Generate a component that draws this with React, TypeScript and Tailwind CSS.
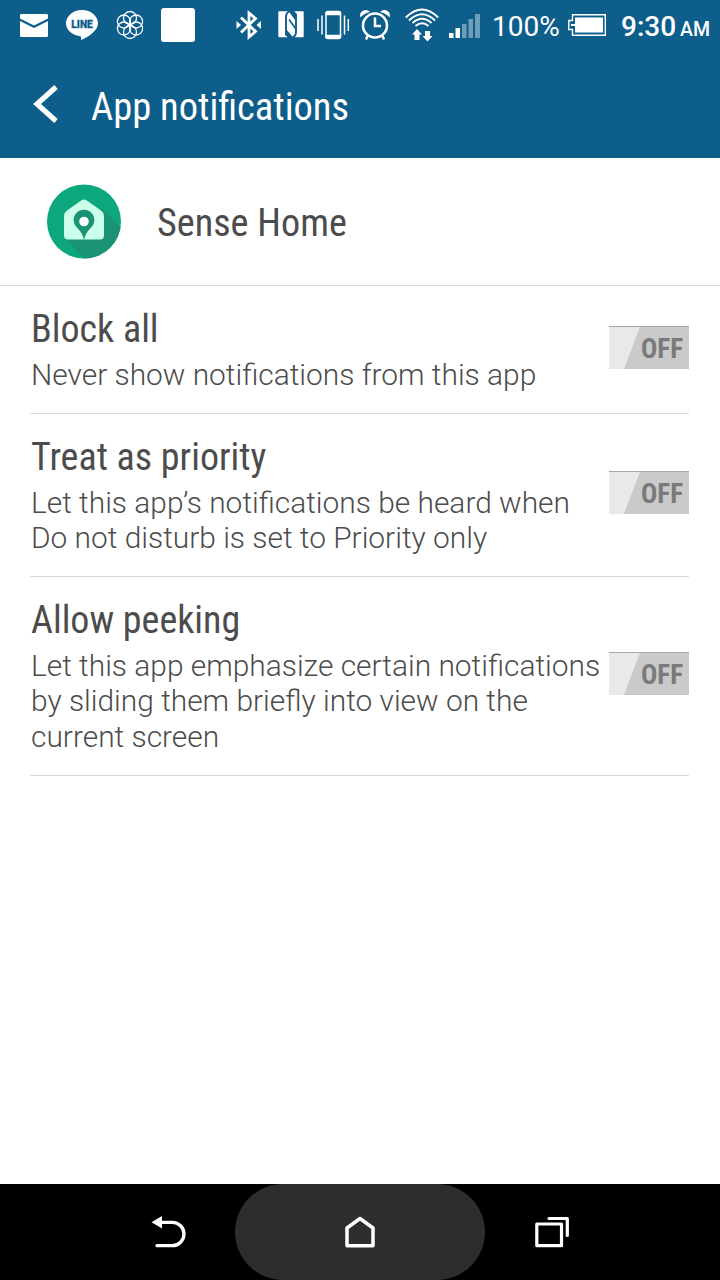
import { useState } from "react";

const settings = [
  {
    id: "block",
    title: "Block all",
    lines: ["Never show notifications from this app"],
    rowClass: "h-[128px]",
  },
  {
    id: "priority",
    title: "Treat as priority",
    lines: [
      "Let this app’s notifications be heard when",
      "Do not disturb is set to Priority only",
    ],
    rowClass: "h-[163px]",
  },
  {
    id: "peeking",
    title: "Allow peeking",
    lines: [
      "Let this app emphasize certain notifications",
      "by sliding them briefly into view on the",
      "current screen",
    ],
    rowClass: "h-[199px]",
  },
];

const condensed =
  "font-['Roboto_Condensed',Roboto,sans-serif] font-stretch-condensed";

function StatusBar() {
  return (
    <div className="flex h-[50px] items-start text-white">
      {/* Mail */}
      <svg className="ml-[18px] h-[50px] w-8 shrink-0" viewBox="18 0 32 50">
        <path d="M21 14H47L48 15V18.5L34 25.5L20 18.5V15Z" fill="white" />
        <path d="M20 21L34 28L48 21V36L47 37H21L20 36Z" fill="white" />
      </svg>
      {/* LINE */}
      <svg className="ml-[14px] h-[50px] w-9 shrink-0" viewBox="64 0 36 50">
        <path
          d="M82 10C73 10 66 16 66 23.5C66 30 72 35 79.500 36C81.500 36.300 81.300 38 81 40C87 37.500 98 31 98 23.500C98 16 91 10 82 10Z"
          fill="white"
        />
        <text
          x="71.300"
          y="27.800"
          textLength="21.500"
          lengthAdjust="spacingAndGlyphs"
          className="fill-[#0e5e8b] stroke-[#0e5e8b] font-[Roboto,sans-serif] text-[11px] font-black"
          strokeWidth="0.3"
        >
          LINE
        </text>
      </svg>
      {/* Flower of circles */}
      <svg
        className="ml-[14px] h-[50px] w-8 shrink-0"
        viewBox="114 0 32 50"
        fill="none"
        stroke="white"
        strokeWidth="1.300"
      >
        <circle cx="130" cy="18" r="6.500" />
        <circle cx="136.100" cy="21.500" r="6.500" />
        <circle cx="136.100" cy="28.500" r="6.500" />
        <circle cx="130" cy="32" r="6.500" />
        <circle cx="123.900" cy="28.500" r="6.500" />
        <circle cx="123.900" cy="21.500" r="6.500" />
      </svg>
      <div className="mt-2 ml-[15px] h-[34px] w-[34px] shrink-0 rounded-[3px] bg-white" />
      {/* Bluetooth */}
      <svg className="ml-[39px] h-[50px] w-[30px] shrink-0" viewBox="234 0 30 50">
        <path
          d="M241 17.500L255.500 31.500L249 37V13L255.500 18.500L241 32.500"
          fill="none"
          stroke="white"
          strokeWidth="2.800"
        />
        <path d="M236.500 21L241 25L236.500 29ZM261 21L256.500 25L261 29Z" fill="white" />
      </svg>
      {/* NFC */}
      <svg className="ml-[12px] h-[50px] w-[30px] shrink-0" viewBox="276 0 30 50">
        <rect x="278.300" y="11.300" width="25.400" height="26" rx="1" fill="white" />
        <g fill="none" stroke="#0e5e8b">
          <path d="M289 11.500Q286 13 286 17V34.500L289 37M293 11.500L296 14.500V32Q296 36 292.500 37.500" strokeWidth="1.900" />
          <path d="M289 19.500L295.500 28.500" strokeWidth="1.600" />
        </g>
        <path d="M288.500 11H294L296 16L295 20ZM287 30L293.500 38H288L286 34Z" fill="#0e5e8b" />
      </svg>
      {/* Vibrate */}
      <svg className="ml-[9px] h-[50px] w-9 shrink-0" viewBox="315 0 36 50">
        <rect x="326" y="11.500" width="14.500" height="27" rx="2" fill="none" stroke="white" strokeWidth="1.500" />
        <path d="M325.300 14Q325.300 11 328 11H338.500Q341.200 11 341.200 14V15.200H325.300ZM325.300 34.800H341.200V36.500Q341.200 39 338.500 39H328Q325.300 39 325.300 36.500Z" fill="white" />
        <path d="M318 19V31M322 15.500V34.500M344.500 15.500V34.500M348.300 19V31" stroke="white" strokeWidth="1.500" />
      </svg>
      {/* Alarm */}
      <svg className="ml-[7px] h-[50px] w-[34px] shrink-0" viewBox="358 0 34 50">
        <circle cx="375" cy="25.500" r="12" fill="none" stroke="white" strokeWidth="2.500" />
        <path d="M375 17.500V26H381M368 35L366 39.500M382 35L384 39.500" fill="none" stroke="white" strokeWidth="2.500" />
        <path d="M360.500 17.500Q359 13 362.500 11Q366.500 8.500 370 12Q364 13 360.500 17.500ZM389.500 17.500Q391 13 387.500 11Q383.500 8.500 380 12Q386 13 389.500 17.500Z" fill="white" />
      </svg>
      {/* Wifi with traffic arrows */}
      <svg className="ml-[11px] h-[50px] w-[38px] shrink-0" viewBox="403 0 38 50">
        <path
          d="M405.800 17.500Q422 1.500 438.200 17.500M409 20.500Q422 8 435 20.500M412.500 23Q422 14.500 431.500 23M415.500 26Q422 20.500 428.500 26"
          fill="none"
          stroke="white"
          strokeWidth="2"
        />
        <path d="M417 29L422 34.500H419.500V40H414.500V34.500H412ZM427.500 41.500L422.500 36H425V31H430V36H432.500Z" fill="white" />
      </svg>
      {/* Signal */}
      <svg className="ml-[7px] h-[50px] w-[34px] shrink-0" viewBox="448 0 34 50">
        <path d="M449 33H453.500V38H449ZM455.500 28H460V38H455.500Z" fill="white" />
        <path d="M462 24H466.500V38H462ZM468.500 19H473V38H468.500ZM475 14H480V38H475Z" fill="white" opacity="0.4" />
      </svg>
      <div className="ml-[10px] w-[68px] shrink-0 font-[Roboto,sans-serif] text-[28px] leading-[54px] whitespace-nowrap">
        100%
      </div>
      {/* Battery */}
      <svg className="ml-[7px] h-[50px] w-10 shrink-0" viewBox="567 0 40 50">
        <path
          d="M572.500 14.700H605.300V35.300H572.500V29.500H568.800V20.500H572.500Z"
          fill="none"
          stroke="white"
          strokeWidth="1.400"
        />
        <path d="M575 17.500H603V32.500H575V26H571V24H575Z" fill="white" />
      </svg>
      <div className="ml-[14px] w-[56px] shrink-0 font-[Roboto,sans-serif] text-[28px] leading-[54px] font-medium whitespace-nowrap">
        9:30
      </div>
      <div className="ml-[3px] shrink-0 font-[Roboto,sans-serif] text-[19.500px] leading-[60px] font-medium whitespace-nowrap">
        AM
      </div>
    </div>
  );
}

function Toggle({ on, onChange }: { on: boolean; onChange: () => void }) {
  return (
    <button
      onClick={onChange}
      className="mb-[5px] flex h-[43px] w-20 shrink-0 items-center justify-end border-t border-[#a8a8a8] bg-[linear-gradient(111deg,#e9e9e9_0_32%,#cacaca_32.500%)] pr-[6px]"
    >
      <span
        className={`${condensed} mt-[3px] text-[27px] leading-none font-bold text-[#7a7a7a]`}
      >
        {on ? "ON" : "OFF"}
      </span>
    </button>
  );
}

function NavBar() {
  return (
    <nav className="flex h-24 items-center justify-center bg-black">
      <button className="flex h-24 w-[132px] items-center justify-center">
        <svg className="h-9 w-9" viewBox="151 1214 36 36">
          <path d="M161 1222.300H172.300A11.700 11.700 0 0 1 172.300 1245.700H157" fill="none" stroke="white" strokeWidth="3.300" strokeLinecap="round" />
          <path d="M151.500 1222.300L162 1216V1228.500Z" fill="white" />
        </svg>
      </button>
      <button className="flex h-24 w-[250px] items-center justify-center rounded-full bg-[#2d2d2d]">
        <svg className="h-9 w-9" viewBox="342 1214 36 36">
          <path d="M347 1228L360 1218.500L373 1228V1245.700H347Z" fill="none" stroke="white" strokeWidth="3.500" strokeLinejoin="round" />
        </svg>
      </button>
      <button className="flex h-24 w-[132px] items-center justify-center">
        <svg className="h-9 w-9" viewBox="533 1214 36 36">
          <path d="M536.800 1224H561.500V1245.700H536.800ZM549 1218.500H567.300V1235.500" fill="none" stroke="white" strokeWidth="3.200" strokeLinecap="round" strokeLinejoin="round" />
        </svg>
      </button>
    </nav>
  );
}

export default function App() {
  const [enabled, setEnabled] = useState<string[]>([]);

  function toggle(id: string) {
    setEnabled((prev) =>
      prev.includes(id) ? prev.filter((item) => item !== id) : [...prev, id],
    );
  }

  return (
    <div className="flex h-[1280px] w-[720px] flex-col overflow-hidden bg-white text-[#4c4c4c]">
      <header className="h-[158px] shrink-0 bg-[#0e5e8b] text-white">
        <StatusBar />
        <div className="flex h-[108px] items-center">
          <svg className="ml-[32px] h-10 w-7" viewBox="32 84 28 40">
            <path d="M56 87L37 104L56 121" fill="none" stroke="white" strokeWidth="5.200" />
          </svg>
          <h1 className={`${condensed} mt-[5px] ml-[31px] text-[38.500px] whitespace-nowrap`}>
            App notifications
          </h1>
        </div>
      </header>

      <div className="flex h-[128px] shrink-0 items-center border-b border-[#d9d9d9]">
        {/* App icon with long shadow */}
        <svg className="ml-[46px] h-[76px] w-[76px]" viewBox="46 183.500 76 76">
          <clipPath id="disc">
            <circle cx="84" cy="221" r="37" />
          </clipPath>
          <circle cx="84" cy="221" r="37" fill="#0ca77d" />
          <path d="M102 208L130 236V275H100L65 238Z" fill="#199373" clipPath="url(#disc)" />
          <path
            d="M81.500 199.800Q84 198 86.500 199.800L101 210Q104 212 104 216V235Q104 239 100 239H68Q64 239 64 235V216Q64 212 67 210Z"
            fill="#caffec"
          />
          <path d="M84 240Q83 233 77 227A10.300 10.300 0 1 1 91 227Q85 233 84 240Z" fill="#199373" />
          <circle cx="84" cy="221" r="4.800" fill="white" />
        </svg>
        <h2 className={`${condensed} mt-[4px] ml-[35px] text-[38.200px] whitespace-nowrap`}>
          Sense Home
        </h2>
      </div>

      <main className="flex-1 pr-[31px] pl-[30px]">
        {settings.map((setting) => (
          <div
            key={setting.id}
            className={`flex items-center border-b border-[#d9d9d9] ${setting.rowClass}`}
          >
            <div className="min-w-0 flex-1 pl-px">
              <h3 className={`${condensed} text-[38px] leading-[45px] whitespace-nowrap`}>
                {setting.title}
              </h3>
              <p className="mt-[5px] font-[Roboto,sans-serif] text-[29.900px] leading-[35.300px] font-light whitespace-nowrap">
                {setting.lines.map((line) => (
                  <span key={line} className="block">
                    {line}
                  </span>
                ))}
              </p>
            </div>
            <Toggle
              on={enabled.includes(setting.id)}
              onChange={() => toggle(setting.id)}
            />
          </div>
        ))}
      </main>

      <NavBar />
    </div>
  );
}
